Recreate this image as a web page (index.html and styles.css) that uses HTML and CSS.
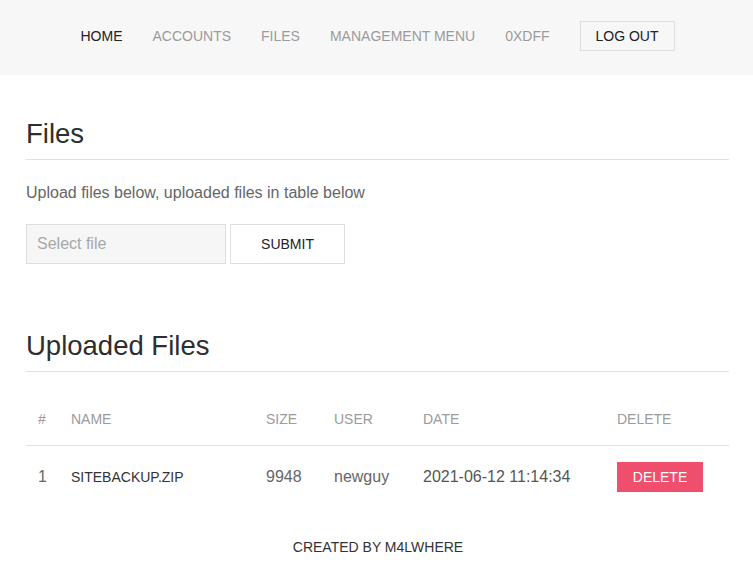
FILE: index.html
```html
<!DOCTYPE html>
<html>
<head>
<meta charset="utf-8">
<title>Files</title>
<link rel="stylesheet" href="styles.css">
</head>
<body>
<header class="topbar">
  <nav class="nav">
    <a class="nav-link active" href="#">HOME</a>
    <a class="nav-link" href="#">ACCOUNTS</a>
    <a class="nav-link" href="#">FILES</a>
    <a class="nav-link" href="#">MANAGEMENT MENU</a>
    <a class="nav-link" href="#">0XDFF</a>
    <a class="nav-btn" href="#">LOG OUT</a>
  </nav>
</header>
<main class="container">
  <h1 class="section-title first">Files</h1>
  <p class="lead">Upload files below, uploaded files in table below</p>
  <form class="upload">
    <input class="file-input" type="text" placeholder="Select file">
    <button class="submit" type="button">SUBMIT</button>
  </form>

  <h1 class="section-title">Uploaded Files</h1>
  <table class="files">
    <colgroup>
      <col class="c1"><col class="c2"><col class="c3"><col class="c4"><col class="c5"><col class="c6">
    </colgroup>
    <thead>
      <tr><th>#</th><th>NAME</th><th>SIZE</th><th>USER</th><th>DATE</th><th>DELETE</th></tr>
    </thead>
    <tbody>
      <tr>
        <td>1</td>
        <td class="fname">SITEBACKUP.ZIP</td>
        <td>9948</td>
        <td>newguy</td>
        <td class="date">2021-06-12 11:14:34</td>
        <td><a class="del" href="#">DELETE</a></td>
      </tr>
    </tbody>
  </table>
</main>
<footer class="footer">CREATED BY M4LWHERE</footer>
</body>
</html>
```

FILE: styles.css
```css
* { box-sizing: border-box; }
html, body { margin: 0; padding: 0; background: #fff; }
body {
  font-family: "Liberation Sans", Arial, sans-serif;
  color: #333;
}
.topbar {
  height: 75px;
  background: #f7f7f7;
  padding-top: 21px;
}
.nav {
  display: flex;
  justify-content: center;
  align-items: baseline;
  gap: 30px;
  padding-left: 2px;
}
.nav-link {
  font-size: 14px;
  color: #9b9b9b;
  text-decoration: none;
}
.nav-link.active { color: #222; }
.nav-btn {
  font-size: 14px;
  line-height: 28px;
  color: #222;
  text-decoration: none;
  border: 1px solid #dedede;
  padding: 0 15px;
}
.container {
  padding: 0 24px 0 26px;
}
.section-title {
  font-size: 27.5px;
  font-weight: 400;
  line-height: 34px;
  color: #2e2e2e;
  margin: 65px 0 0;
  padding-bottom: 8px;
  border-bottom: 1px solid #e1e1e1;
}
.section-title.first { margin-top: 42px; }
.lead {
  font-size: 16px;
  line-height: 24px;
  color: #666;
  margin: 21px 0 0;
}
.upload {
  display: flex;
  gap: 4px;
  margin-top: 19px;
}
.file-input {
  width: 200px;
  height: 40px;
  background: #f6f6f6;
  border: 1px solid #dedede;
  border-radius: 0;
  font-family: inherit;
  font-size: 16px;
  padding: 0 10px;
  outline: none;
}
.file-input::placeholder { color: #a8a8a8; }
.submit {
  width: 115px;
  height: 40px;
  background: #fff;
  border: 1px solid #dedede;
  border-radius: 0;
  font-family: inherit;
  font-size: 14px;
  color: #222;
  padding: 0;
}
.files {
  width: 100%;
  table-layout: fixed;
  border-collapse: collapse;
  margin-top: 23px;
}
.c1 { width: 33px; }
.c2 { width: 195px; }
.c3 { width: 68px; }
.c4 { width: 89px; }
.c5 { width: 194px; }
.c6 { width: 124px; }
.files th {
  text-align: left;
  font-weight: 400;
  font-size: 14px;
  line-height: 24px;
  color: #9b9b9b;
  padding: 12px 0 14px 12px;
  border-bottom: 1px solid #e1e1e1;
}
.files td {
  text-align: left;
  font-size: 16px;
  line-height: 24px;
  color: #666;
  padding: 16px 0 14px 12px;
  vertical-align: baseline;
  white-space: nowrap;
}
.files td.fname { font-size: 14px; color: #333; }
.files td.date { color: #555; }
.del {
  display: inline-block;
  background: #f04e6d;
  color: #fff;
  font-size: 14px;
  line-height: 30px;
  width: 86px;
  text-align: center;
  text-decoration: none;
}
.footer {
  text-align: center;
  font-size: 14px;
  color: #333;
  margin-top: 33px;
  padding-left: 3px;
}
```
